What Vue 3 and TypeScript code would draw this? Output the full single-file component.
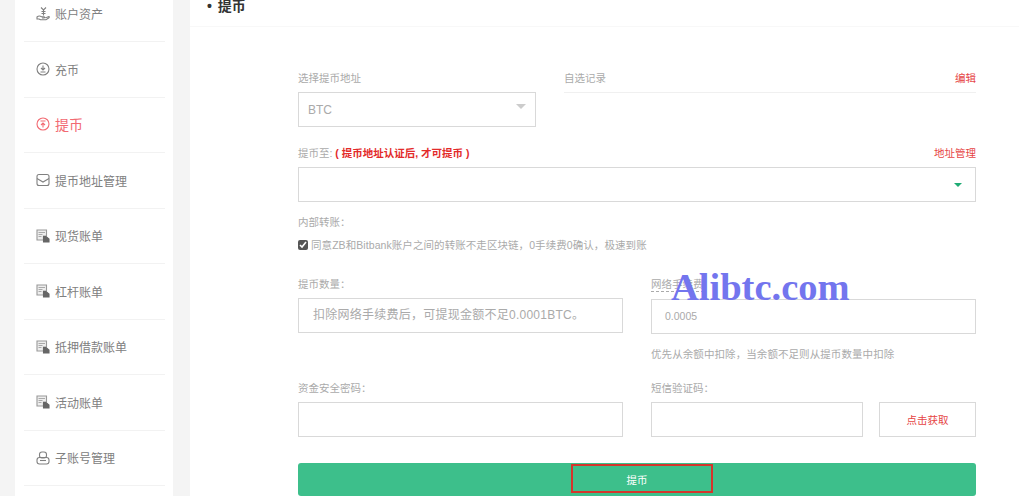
<script setup lang="ts">
type MenuIcon = 'assets' | 'deposit' | 'withdraw' | 'address' | 'bill' | 'sub'

const menu: { label: string; icon: MenuIcon; active?: boolean }[] = [
  { label: '账户资产', icon: 'assets' },
  { label: '充币', icon: 'deposit' },
  { label: '提币', icon: 'withdraw', active: true },
  { label: '提币地址管理', icon: 'address' },
  { label: '现货账单', icon: 'bill' },
  { label: '杠杆账单', icon: 'bill' },
  { label: '抵押借款账单', icon: 'bill' },
  { label: '活动账单', icon: 'bill' },
  { label: '子账号管理', icon: 'sub' },
]
</script>

<template>
  <div class="page">
    <aside class="sidebar">
      <a v-for="item in menu" :key="item.label" class="menu-item" :class="{ 'menu-item--active': item.active }">
        <svg class="menu-icon" viewBox="0 0 14 14" fill="none" stroke="currentColor" stroke-width="1.1">
          <template v-if="item.icon === 'assets'">
            <path d="M5 .5l2.500 2.500L10 .5M7.500 3v5.500M5.500 4.500h4M5.500 6.500h4" />
            <path d="M1 10c1.500-1.200 3-1.200 4.500-.3h2.300c1 0 1 1.300 0 1.300H6l4.500-.5 2.300-1c.6 0 .8.700.2 1.200l-3 2.100H4.500L3 12H1z" />
          </template>
          <template v-else-if="item.icon === 'deposit'">
            <circle cx="7" cy="7" r="6" />
            <path d="M7 3.500v4.500M5 6l2 2 2-2M4.500 10h5" />
          </template>
          <template v-else-if="item.icon === 'withdraw'">
            <circle cx="7" cy="7" r="6" />
            <path d="M7 6v4.500M5 8l2-2 2 2M4.500 4h5" />
          </template>
          <template v-else-if="item.icon === 'address'">
            <rect x="1" y="1.500" width="12" height="11" rx="2" />
            <path d="M1 5.500l6 3.500 6-3.500" />
          </template>
          <template v-else-if="item.icon === 'bill'">
            <path d="M1 1h9.500v6H7.500v4H1z" fill="#eee" stroke="#999" />
            <path d="M2.500 3.500h6.500M2.500 5.500h4M2.500 7.500h3" stroke="#aaa" />
            <path d="M7.500 7.500h2.500l3 2.500v3H7.500z" fill="#666" stroke="#666" />
          </template>
          <template v-else>
            <rect x="3.500" y="1" width="7" height="6" rx="2.500" />
            <rect x="1" y="6.500" width="12" height="6.500" rx="2.500" />
            <path d="M4 9.500h6" />
          </template>
        </svg>
        <span>{{ item.label }}</span>
      </a>
    </aside>

    <main class="content">
      <header class="content-head">• 提币</header>
      <form class="panel" @submit.prevent>
        <div class="row row--top">
          <div class="field field--coin">
            <label class="label">选择提币地址</label>
            <div class="box box--coin">
              <span>BTC</span>
              <i class="caret caret--grey"></i>
            </div>
          </div>
          <div class="records">
            <span class="label">自选记录</span>
            <a class="link">编辑</a>
          </div>
        </div>

        <div class="label-row">
          <label class="label">提币至: <b class="warn">( 提币地址认证后, 才可提币 )</b></label>
          <a class="link">地址管理</a>
        </div>
        <div class="box box--address"><i class="caret caret--green"></i></div>

        <p class="label inner-title">内部转账：</p>
        <label class="agree">
          <input type="checkbox" checked />
          <span>同意ZB和Bitbank账户之间的转账不走区块链，0手续费0确认，极速到账</span>
        </label>

        <div class="grid">
          <div class="field">
            <label class="label">提币数量：</label>
            <div class="box box--hint">扣除网络手续费后，可提现金额不足0.0001BTC。</div>
          </div>
          <div class="field">
            <label class="label label--dashed">网络手续费</label>
            <div class="box box--fee">0.0005</div>
            <p class="label fee-note">优先从余额中扣除，当余额不足则从提币数量中扣除</p>
          </div>
          <div class="field">
            <label class="label">资金安全密码：</label>
            <div class="box"></div>
          </div>
          <div class="field">
            <label class="label">短信验证码：</label>
            <div class="sms">
              <div class="box"></div>
              <button class="sms-btn" type="button">点击获取</button>
            </div>
          </div>
        </div>

        <button class="submit" type="submit">提币<i class="submit-mark"></i></button>
      </form>
    </main>

    <div class="watermark">Alibtc.com</div>
  </div>
</template>

<style>
html,
body {
  margin: 0;
  height: 100%;
  overflow: hidden;
  background: #f4f4f4;
}
</style>

<style scoped>
.page {
  position: relative;
  display: flex;
  align-items: flex-start;
  gap: 17px;
  height: 496px;
  padding-left: 15px;
  overflow: hidden;
  font-family: "Liberation Sans", "Noto Sans CJK SC", sans-serif;
  color: #666;
}

.sidebar {
  flex: none;
  display: flex;
  flex-direction: column;
  width: 158px;
  margin-top: -13.500px;
  padding: 0 8px 20px 9px;
  box-sizing: border-box;
  background: #fff;
}

.menu-item {
  display: flex;
  align-items: center;
  gap: 5px;
  height: 55.500px;
  box-sizing: border-box;
  padding-left: 12px;
  border-bottom: 1px solid #f2f2f2;
  font-size: 12px;
  color: #808080;
}

.menu-item--active {
  padding-bottom: 2px;
  font-size: 14px;
  color: #f26a72;
}

.menu-icon {
  flex: none;
  width: 14px;
  height: 14px;
}

.content {
  flex: 1;
  min-width: 0;
}

.content-head {
  height: 35px;
  box-sizing: border-box;
  margin-top: -8px;
  padding-left: 17px;
  line-height: 28px;
  background: #fff;
  border-bottom: 1px solid #f8f8f8;
  font-size: 14px;
  font-weight: 700;
  word-spacing: 2px;
  color: #333;
}

.panel {
  height: 480px;
  box-sizing: border-box;
  padding: 44px 43px 0 108px;
  background: #fff;
}

.label {
  margin: 0;
  font-size: 10.500px;
  line-height: 14px;
  color: #aaa;
}

.row--top {
  display: flex;
  gap: 28px;
}

.field--coin {
  flex: none;
  width: 238px;
}

.field--coin .label {
  display: block;
  margin-bottom: 7px;
}

.box {
  box-sizing: border-box;
  height: 35px;
  border: 1px solid #d9d9d9;
  background: #fff;
}

.box--coin {
  display: flex;
  align-items: center;
  justify-content: space-between;
  padding: 0 9px;
  font-size: 12px;
  color: #aaa;
}

.caret {
  width: 0;
  height: 0;
  border-style: solid;
  border-width: 5px 5px 0;
  border-color: transparent;
}

.caret--grey {
  margin-top: -6px;
  border-top-color: #ccc;
}

.caret--green {
  border-width: 4px 4px 0;
  border-top-color: #1fab74;
}

.records {
  flex: 1;
  display: flex;
  justify-content: space-between;
  height: 22px;
  box-sizing: border-box;
  border-bottom: 1px solid #f0f0f0;
}

.link {
  font-size: 10.500px;
  line-height: 14px;
  color: #e64545;
}

.label-row {
  display: flex;
  justify-content: space-between;
  margin-top: 19px;
  margin-bottom: 7px;
}

.warn {
  color: #e32b2b;
  font-weight: 700;
}

.box--address {
  display: flex;
  align-items: center;
  justify-content: flex-end;
  padding-right: 13px;
}

.inner-title {
  margin-top: 13px;
}

.agree {
  display: flex;
  align-items: center;
  gap: 3px;
  margin-top: 9px;
  font-size: 10.500px;
  line-height: 14px;
  letter-spacing: 0.070px;
  color: #aaa;
}

.agree input {
  width: 10px;
  height: 10px;
  margin: 0;
  accent-color: #555;
}

.grid {
  display: grid;
  grid-template-columns: 325px 325px;
  justify-content: space-between;
  row-gap: 20px;
  margin-top: 25px;
}

.field .label {
  display: block;
}

.grid .label:first-child {
  margin-bottom: 7px;
}

.label--dashed {
  width: max-content;
  border-bottom: 1px dashed #aaa;
  margin-bottom: 6px;
}

.box--hint {
  padding-left: 14px;
  font-size: 12px;
  line-height: 33px;
  letter-spacing: 0.250px;
  color: #aaa;
}

.box--fee {
  padding-left: 13px;
  font-size: 10.500px;
  line-height: 33px;
  color: #aaa;
}

.fee-note {
  margin-top: 13px;
  letter-spacing: 0.080px;
}

.sms {
  display: flex;
  justify-content: space-between;
}

.sms .box {
  width: 212px;
}

.sms-btn {
  width: 97px;
  height: 35px;
  padding: 0;
  border: 1px solid #d9d9d9;
  background: #fff;
  font: inherit;
  font-size: 10.500px;
  color: #e64545;
}

.submit {
  position: relative;
  display: block;
  width: 100%;
  height: 33px;
  margin-top: 26px;
  padding: 0;
  border: 0;
  border-radius: 3px;
  background: #3dbf8b;
  font: inherit;
  font-size: 10.500px;
  color: #fff;
}

.submit-mark {
  position: absolute;
  left: 273px;
  top: 1px;
  box-sizing: border-box;
  width: 142px;
  height: 29px;
  border: 2px solid #d5352c;
}

.watermark {
  position: absolute;
  left: 671px;
  top: 264px;
  font-family: "Liberation Serif", serif;
  font-size: 38.500px;
  line-height: 46px;
  font-weight: 700;
  color: #7375ee;
}
</style>
